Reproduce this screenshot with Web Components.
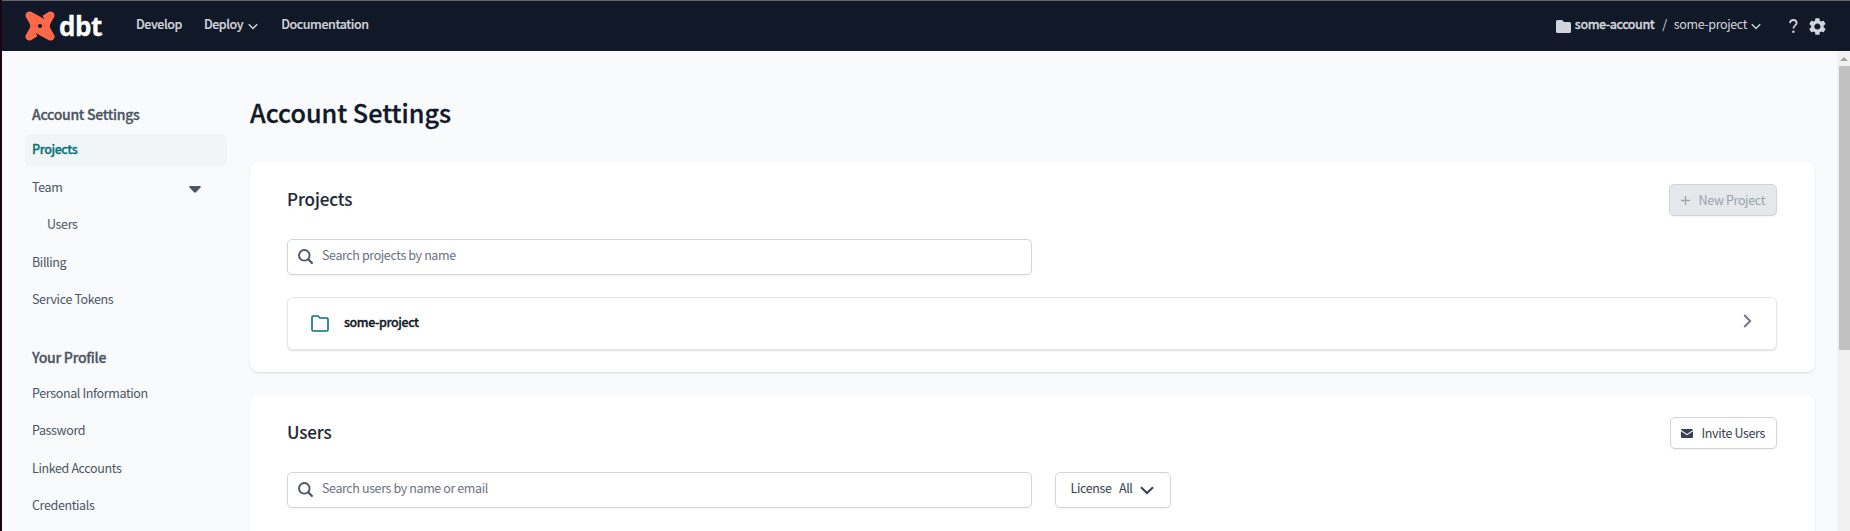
<!DOCTYPE html>
<html lang="en">
<head>
<meta charset="utf-8">
<title>Account Settings</title>
<style>
html,body{margin:0;height:100%;overflow:hidden}
body{font-family:"Noto Sans CJK SC","Noto Sans",sans-serif;color:#4b5563;background:#f9fafc}
</style>
</head>
<body>
<app-shell></app-shell>
<script>
const define=(name,html)=>customElements.define(name,class extends HTMLElement{
  constructor(){super();const t=document.createElement('template');t.innerHTML=html;
    this.attachShadow({mode:'open'}).append(t.content.cloneNode(true));}
});

const shapes={
  chevron:'<path d="M.8 1.2 5 5.6 9.2 1.2" fill="none" stroke="currentColor" stroke-width="1.4"/>',
  chevronbold:'<path d="M1 1.2 7 7 13 1.2" fill="none" stroke="currentColor" stroke-width="2"/>',
  right:'<path d="M1.2 1 7.2 7 1.2 13" fill="none" stroke="currentColor" stroke-width="1.8"/>',
  caret:'<path d="M.8 0H11.2Q12.3.6 11.5 1.6L7 6.3Q6 7.2 5 6.3L.5 1.6Q-.3.6.8 0Z" fill="currentColor"/>',
  folder:'<path d="M1.5 0H6L8 2H13.5Q15 2 15 3.5V11.5Q15 13 13.5 13H1.5Q0 13 0 11.5V1.5Q0 0 1.5 0Z" fill="currentColor"/>',
  outline:'<path d="M2.3 1H7L9 3H15.7Q17 3 17 4.3V14.7Q17 16 15.7 16H2.3Q1 16 1 14.7V2.3Q1 1 2.3 1Z" fill="none" stroke="currentColor" stroke-width="1.6"/>',
  search:'<circle cx="6.3" cy="6.3" r="5.3" fill="none" stroke="currentColor" stroke-width="1.9"/><path d="M10.2 10.2 14.6 14.6" stroke="currentColor" stroke-width="2.2"/>',
  plus:'<path d="M4.5 0V9M0 4.5H9" stroke="currentColor" stroke-width="1.3"/>',
  mail:'<path d="M1 0H11Q12 0 12 1L6 5 0 1Q0 0 1 0ZM0 2.2 6 6.2 12 2.2V8Q12 9 11 9H1Q0 9 0 8Z" fill="currentColor"/>',
  gear:'<path fill="currentColor" d="M19.14 12.94c.04-.3.06-.61.06-.94 0-.32-.02-.64-.07-.94l2.03-1.58c.18-.14.23-.41.12-.61l-1.92-3.32c-.12-.22-.37-.29-.59-.22l-2.39.96c-.5-.38-1.03-.7-1.62-.94l-.36-2.54c-.04-.24-.24-.41-.48-.41h-3.84c-.24 0-.43.17-.47.41l-.36 2.54c-.59.24-1.13.57-1.62.94l-2.39-.96c-.22-.08-.47 0-.59.22L2.74 8.87c-.12.21-.08.47.12.61l2.03 1.58c-.05.3-.09.63-.09.94s.02.64.07.94l-2.03 1.58c-.18.14-.23.41-.12.61l1.92 3.32c.12.22.37.29.59.22l2.39-.96c.5.38 1.03.7 1.62.94l.36 2.54c.05.24.24.41.48.41h3.84c.24 0 .44-.17.47-.41l.36-2.54c.59-.24 1.13-.56 1.62-.94l2.39.96c.22.08.47 0 .59-.22l1.92-3.32c.12-.22.07-.47-.12-.61l-2.01-1.58zM12 15.6c-1.98 0-3.6-1.62-3.6-3.6s1.62-3.6 3.6-3.6 3.6 1.62 3.6 3.6-1.62 3.6-3.6 3.6z"/>',
  help:'<path d="M1 4.2C1.2 2 2.5 1 4.3 1 6.2 1 7.6 2.1 7.6 3.9 7.6 6.4 4.4 6.5 4.4 9.6" fill="none" stroke="currentColor" stroke-width="1.8"/><circle cx="4.4" cy="12.8" r="1.2" fill="currentColor"/>',
  logo:'<path d="M5.6.6 15.4 5.8 19.2 8.2 17.6 4.8 24.4.6A4 4 0 0 1 29.4 5.4L25.2 13Q24.4 15 25.2 17L29.5 24.6A4 4 0 0 1 24.4 29.4L14.6 24.2 10.8 21.8 12.4 25.2 5.6 29.4A4 4 0 0 1 .6 24.6L4.8 17Q5.6 15 4.8 13L.6 5.4A4 4 0 0 1 5.6.6Z" fill="#ff694a"/><circle cx="15" cy="15" r="2.1" fill="#111827"/>'
};
const boxes={chevron:[10,7],chevronbold:[14,9],right:[9,14],caret:[12,7],folder:[15,13],outline:[18,17],search:[15,15],plus:[9,9],mail:[12,9],gear:[17,17,'2.4 2.2 19.4 19.6'],help:[9,14],logo:[30,30]};
customElements.define('ui-icon',class extends HTMLElement{
  constructor(){super();this.attachShadow({mode:'open'});}
  connectedCallback(){const n=this.getAttribute('name'),[w,h,v]=boxes[n];
    this.shadowRoot.innerHTML=`<style>:host{display:block;flex:none;width:${w}px;height:${h}px}svg{display:block}</style><svg width="${w}" height="${h}" viewBox="${v||`0 0 ${w} ${h}`}">${shapes[n]}</svg>`;}
});

define('top-bar',`<style>
:host{display:flex;align-items:center;height:50px;border-top:1px solid #666;background:#111827;color:#d1d5db;font-size:12.5px;letter-spacing:-.38px;line-height:20px;box-sizing:content-box}
.brand{display:flex;align-items:flex-end;font:700 26px/30px "Open Sans",sans-serif;letter-spacing:-.4px;-webkit-text-stroke:.3px;color:#fff;margin:0 0 1px 4px;width:45px}
.brand::after{content:"";width:1px;height:1px;background:#bbb;margin:0 0 6px 0}
ui-icon[name=logo]{margin-left:23px}
.nav{display:flex;align-items:center;font-weight:500;-webkit-text-stroke:.2px;letter-spacing:-.43px;margin-left:32px;flex:1;padding-bottom:4px}
.nav ui-icon{margin:4px 23px 0 5px}
.dev{margin-right:22px}
.right{display:flex;align-items:center;padding-bottom:4px}
b{font-weight:500;-webkit-text-stroke:.3px;letter-spacing:-.45px;margin-left:4px}
i{font-style:normal;margin:0 7px 0 8px}
</style><ui-icon name="logo"></ui-icon><span class="brand">dbt</span>
<div class="nav"><span class="dev">Develop</span><span>Deploy</span><ui-icon name="chevron"></ui-icon><span>Documentation</span></div>
<div class="right"><ui-icon name="folder" style="margin-top:4px"></ui-icon><b>some-account</b><i>/</i><span>some-project</span><ui-icon name="chevron" style="margin:4px 28px 0 4px"></ui-icon><ui-icon name="help" style="margin:4px 11px 0 0"></ui-icon><ui-icon name="gear" style="margin:4px 24px 0 0"></ui-icon></div>`);

define('nav-item',`<style>
:host{display:flex;align-items:center;justify-content:space-between;height:33px;margin-bottom:4.4px;padding:0 26px 2px 7px;box-sizing:border-box;border-radius:6px;font-size:12.5px;letter-spacing:-.37px;line-height:20px}
:host([active]){background:#f3f4f6;color:#047377;font-weight:500;-webkit-text-stroke:.3px;letter-spacing:-.42px;padding-bottom:4px}
:host([nested]){padding-left:22px}
</style><span><slot></slot></span><slot name="end"></slot>`);
define('nav-group',`<style>:host{display:block}h2{margin:0 0 10px 7px;font-size:14px;letter-spacing:-.27px;line-height:20px;font-weight:500;-webkit-text-stroke:.3px}</style><h2><slot name="title"></slot></h2><slot></slot>`);
define('side-nav',`<style>:host{display:block;width:202px;padding:53px 23px 0;flex:none}nav-group+nav-group{margin-top:30px}nav-group+nav-group nav-item:first-of-type{margin-top:11px}</style>
<nav-group><span slot="title">Account Settings</span><nav-item active>Projects</nav-item><nav-item>Team<ui-icon slot="end" name="caret" style="margin-top:5px"></ui-icon></nav-item><nav-item nested>Users</nav-item><nav-item>Billing</nav-item><nav-item>Service Tokens</nav-item></nav-group>
<nav-group><span slot="title">Your Profile</span><nav-item>Personal Information</nav-item><nav-item>Password</nav-item><nav-item>Linked Accounts</nav-item><nav-item>Credentials</nav-item></nav-group>`);

define('ui-button',`<style>
:host{display:flex;align-items:center;gap:8px;box-sizing:border-box;height:32px;border:1px solid #d1d5db;border-radius:5px;padding:0 11px 0 10.5px;background:#fff;color:#374151;font-size:12.5px;letter-spacing:-.36px;line-height:20px;box-shadow:0 1px 2px #0000000d}
:host([disabled]){background:#e5e7eb;color:#9ca3af;padding-left:11.5px;gap:8.5px}
</style><slot name="icon"></slot><span><slot></slot></span>`);
define('search-field',`<style>
:host{display:flex;align-items:center;gap:9px;box-sizing:border-box;width:745px;height:36px;border:1px solid #d1d5db;border-radius:5px;padding:0 10px;background:#fff;color:#4b5563;box-shadow:0 1px 2px #0000000d;font-size:12.5px;letter-spacing:-.39px;line-height:20px}
span{color:#6b7280;padding-bottom:4px}
</style><ui-icon name="search" style="margin-top:-1px"></ui-icon><span><slot></slot></span>`);
define('filter-select',`<style>
:host{display:flex;align-items:center;box-sizing:border-box;width:116px;height:36px;border:1px solid #d1d5db;border-radius:5px;padding:0 14.5px;background:#fff;color:#374151;box-shadow:0 1px 2px #0000000d;font-size:12.5px;letter-spacing:-.38px;line-height:20px}
span{padding-bottom:4px;margin-right:7.5px}
</style><span>License</span><span>All</span><ui-icon name="chevronbold" style="margin-top:1px"></ui-icon>`);
define('project-row',`<style>
:host{display:flex;align-items:center;box-sizing:border-box;height:53px;margin-top:22px;border:1px solid #e5e7eb;border-radius:6px;padding:0 24px 0 23px;background:#fff;box-shadow:0 1px 2px #0002;color:#6b7280}
span{flex:1;font-size:12.5px;letter-spacing:-.42px;line-height:20px;font-weight:500;-webkit-text-stroke:.3px;color:#111827;margin-left:15px;padding-bottom:4px}
</style><ui-icon name="outline" style="color:#047377"></ui-icon><span><slot></slot></span><ui-icon name="right" style="margin-top:-6px"></ui-icon>`);
define('settings-card',`<style>
:host{display:block;box-sizing:border-box;height:210px;margin-bottom:23px;padding:22px 38px 0 37px;border-radius:8px;background:#fff;box-shadow:0 1px 2px #0002}
header{display:flex;justify-content:space-between;align-items:center;height:32px;margin-bottom:23px}
h2{margin:0 0 3px 0;font-size:17px;letter-spacing:-.1px;line-height:26px;font-weight:500;-webkit-text-stroke:.1px;color:#1f2937}
.tools{display:flex;gap:23px}
</style><header><h2><slot name="title"></slot></h2><slot name="action"></slot></header><div class="tools"><slot name="tools"></slot></div><slot></slot>`);
define('scroll-bar',`<style>
:host{display:flex;flex-direction:column;align-items:flex-end;width:13px;flex:none;background:#f1f1f1}
.up{border:4px solid transparent;border-top:0;border-bottom:4px solid #a3a3a3;margin:6px 2px 5px 0}
.thumb{width:11px;height:284px;background:#c1c1c1}
</style><div class="up"></div><div class="thumb"></div>`);

define('app-shell',`<style>
:host{display:block;height:531px;box-sizing:border-box;border-left:2px solid #1b0514;overflow:hidden}
.body{display:flex;height:480px}
main{flex:1;padding-right:22px}
h1{font-size:25.2px;line-height:40px;font-weight:500;-webkit-text-stroke:.3px;color:#111827;margin:41px 0 30px}
</style><top-bar></top-bar><div class="body"><side-nav></side-nav><main><h1>Account Settings</h1>
<settings-card><span slot="title">Projects</span><ui-button slot="action" disabled><ui-icon slot="icon" name="plus"></ui-icon>New Project</ui-button><search-field slot="tools">Search projects by name</search-field><project-row>some-project</project-row></settings-card>
<settings-card><span slot="title">Users</span><ui-button slot="action"><ui-icon slot="icon" name="mail"></ui-icon>Invite Users</ui-button><search-field slot="tools">Search users by name or email</search-field><filter-select slot="tools"></filter-select></settings-card>
</main><scroll-bar></scroll-bar></div>`);
</script>
</body>
</html>
